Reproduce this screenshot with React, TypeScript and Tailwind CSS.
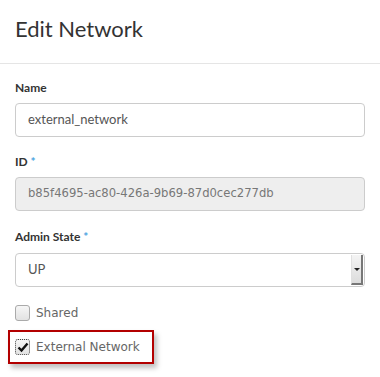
import React from "react";

export default function App() {
  return (
    <div className="w-[380px] h-[377px] bg-white overflow-hidden" style={{ fontFamily: "Lato, 'Open Sans', sans-serif" }}>
      <div className="h-[64px] border-b border-[#e5e5e5] pl-[15px] pt-[14px]">
        <h1 className="text-[22px] leading-[30px] text-[#333]">Edit Network</h1>
      </div>
      <div className="px-[15px] pt-[16px]">
        <div className="text-[12px] leading-[16px] font-bold text-[#333]">Name</div>
        <div className="mt-[7px] h-[34px] w-[350px] rounded-[4px] border border-[#ccc] flex items-center px-[12px] text-[13px] text-[#555]">
          external_network
        </div>
        <div className="mt-[17px] text-[12px] leading-[16px] font-bold text-[#333]">
          ID <span className="text-[#4aa3df]">*</span>
        </div>
        <div className="mt-[7px] h-[34px] w-[350px] rounded-[4px] border border-[#ccc] bg-[#eee] flex items-center px-[12px] text-[11.6px] text-[#777]" style={{ fontFamily: "'DejaVu Sans', sans-serif" }}>
          b85f4695-ac80-426a-9b69-87d0cec277db
        </div>
        <div className="mt-[18px] text-[12px] leading-[16px] font-bold text-[#333]">
          Admin State <span className="text-[#4aa3df]">*</span>
        </div>
        <div className="mt-[8px] h-[34px] w-[350px] rounded-[4px] border border-[#ccc] flex items-center pl-[12px] text-[13px] text-[#555] relative">
          UP
          <div className="absolute right-[1px] top-[1px] bottom-[1px] w-[12px] bg-gradient-to-b from-[#f4f4f4] to-[#dcdcdc] border-l border-[#e0e0e0] border-r-2 border-r-[#777] border-b-2 border-b-[#777] flex items-center justify-center">
            <div className="w-0 h-0 border-l-[3px] border-r-[3px] border-t-[3px] border-l-transparent border-r-transparent border-t-[#222]" />
          </div>
        </div>
        <div className="mt-[17px] flex items-center gap-[6px] h-[18px]">
          <div className="w-[15px] h-[16px] rounded-[3px] border border-[#aaa] bg-gradient-to-b from-[#f6f6f6] to-[#e2e2e2]" />
          <span className="text-[12px] text-[#666]" style={{ fontFamily: "'DejaVu Sans', sans-serif" }}>Shared</span>
        </div>
      </div>
      <div className="ml-[8px] mt-[8px] w-[146px] h-[34px] border-2 border-[#b30000] shadow-[3px_4px_5px_rgba(0,0,0,0.25)] flex items-center pl-[5px] gap-[6px]">
        <div className="w-[15px] h-[16px] rounded-[3px] border border-dotted border-[#444] bg-gradient-to-b from-[#f6f6f6] to-[#e2e2e2] flex items-center justify-center">
          <svg width="12" height="11" viewBox="0 0 12 11">
            <path d="M1.5 5.5 L4.5 8.5 L10.5 1.5" stroke="#111" strokeWidth="2.4" fill="none" />
          </svg>
        </div>
        <span className="text-[12px] text-[#666]" style={{ fontFamily: "'DejaVu Sans', sans-serif" }}>External Network</span>
      </div>
    </div>
  );
}
